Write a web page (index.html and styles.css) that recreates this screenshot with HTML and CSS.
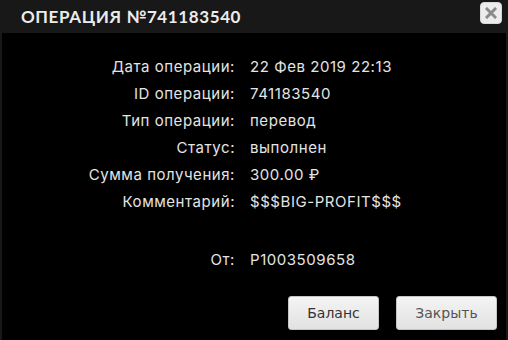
FILE: index.html
```html
<!DOCTYPE html>
<html lang="ru">
<head>
<meta charset="utf-8">
<link rel="stylesheet" href="styles.css">
</head>
<body>
<div class="dialog">
  <div class="titlebar">
    <span class="title">Операция №741183540</span>
    <button class="close" aria-label="Закрыть">
      <svg width="12" height="12" viewBox="0 0 12 12"><path d="M2 2 L10 10 M10 2 L2 10" stroke="#8a8a8a" stroke-width="3" stroke-linecap="square"/></svg>
    </button>
  </div>
  <div class="content">
    <div class="details">
      <div class="label">Дата операции:</div><div class="value">22 Фев 2019 22:13</div>
      <div class="label">ID операции:</div><div class="value">741183540</div>
      <div class="label">Тип операции:</div><div class="value">перевод</div>
      <div class="label">Статус:</div><div class="value">выполнен</div>
      <div class="label">Сумма получения:</div><div class="value">300.00 ₽</div>
      <div class="label">Комментарий:</div><div class="value">$$$BIG-PROFIT$$$</div>
      <div class="label from">От:</div><div class="value from">P1003509658</div>
    </div>
    <div class="buttons">
      <button class="btn">Баланс</button>
      <button class="btn btn-muted">Закрыть</button>
    </div>
  </div>
</div>
</body>
</html>
```
FILE: styles.css
```css
html, body {
  margin: 0;
  padding: 0;
  background: #000;
}
.dialog {
  width: 508px;
  height: 340px;
  display: flex;
  flex-direction: column;
  background: #000;
}
.titlebar {
  height: 33px;
  background: #181818;
  display: flex;
  align-items: center;
  justify-content: space-between;
  padding: 0 6px 0 21px;
  box-sizing: border-box;
}
.title {
  font-family: "Lato", sans-serif;
  font-weight: 700;
  font-size: 17px;
  letter-spacing: 0.6px;
  text-transform: uppercase;
  color: #ececec;
  margin-top: -1px;
}
.close {
  width: 22px;
  height: 22px;
  margin-top: -8px;
  padding: 0;
  border: 1px solid #d8d8d8;
  border-radius: 4px;
  background: #ececec;
  display: flex;
  align-items: center;
  justify-content: center;
}
.content {
  flex: 1;
  border-left: 2px solid #181818;
  border-right: 2px solid #181818;
  display: flex;
  flex-direction: column;
  justify-content: space-between;
  padding: 20px 9px 10px 0;
}
.details {
  display: grid;
  grid-template-columns: 233px auto;
  column-gap: 15px;
  grid-auto-rows: 27px;
  align-items: center;
  font-family: "Inter", sans-serif;
  font-size: 15px;
  letter-spacing: 0.55px;
  color: #e4e4e4;
}
.label {
  text-align: right;
}
.from {
  margin-top: 61px;
}
.buttons {
  display: flex;
  justify-content: flex-end;
  gap: 17px;
}
.btn {
  height: 34px;
  border: 1px solid #c6c6c6;
  border-radius: 3px;
  background: linear-gradient(#f4f4f4, #e2e2e2);
  font-family: "DejaVu Sans", sans-serif;
  font-size: 14px;
  color: #333;
  padding: 0 17px;
  min-width: 91px;
}
.btn-muted {
  color: #555;
  min-width: 101px;
}
```
